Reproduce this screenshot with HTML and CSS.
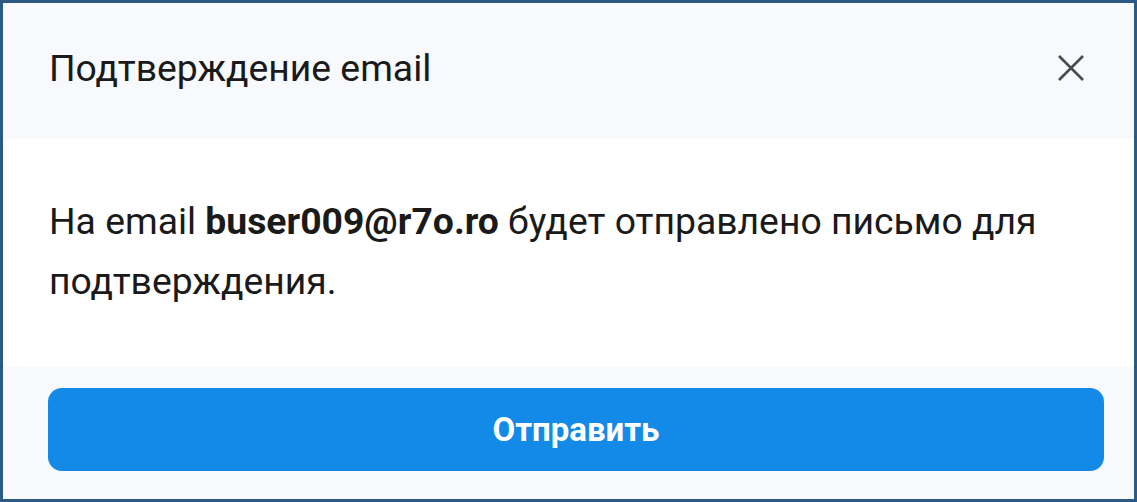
FILE: index.html
```html
<!DOCTYPE html>
<html lang="ru">
<head>
  <meta charset="UTF-8" />
  <meta name="viewport" content="width=device-width, initial-scale=1.0"/>
  <title>Подтверждение email</title>
  <link rel="stylesheet" href="styles.css">
</head>
<body>
  <div class="modal">
    <div class="modal-header">
      <h2>Подтверждение email</h2>
      <button class="close-btn" aria-label="Закрыть">
        <svg width="28" height="28" viewBox="0 0 28 28">
          <path d="M2 2 L26 26 M26 2 L2 26" stroke="#4a4a4a" stroke-width="2.6" fill="none"/>
        </svg>
      </button>
    </div>

    <div class="modal-body">
      <p>На email <strong>buser009@r7o.ro</strong> будет отправлено письмо для подтверждения.</p>
    </div>

    <div class="modal-footer">
      <button class="send-btn">Отправить</button>
    </div>
  </div>
</body>
</html>
```

FILE: styles.css
```css
html, body {
  margin: 0;
  padding: 0;
}

body {
  font-family: Roboto, "Liberation Sans", Arial, sans-serif;
  background: #fff;
}

.modal {
  width: 1137px;
  height: 502px;
  box-sizing: border-box;
  border: 3px solid #2d5985;
  display: flex;
  flex-direction: column;
}

.modal-header {
  height: 136px;
  box-sizing: border-box;
  background: #f7f9fc;
  display: flex;
  align-items: center;
  justify-content: space-between;
  padding: 0 49px 6px 46px;
}

.modal-header h2 {
  margin: 0;
  font-weight: 400;
  font-size: 37.3px;
  color: #1a1a1a;
}

.close-btn {
  background: none;
  border: none;
  padding: 0;
  width: 28px;
  height: 28px;
  cursor: pointer;
}

.modal-body {
  height: 228px;
  background: #fff;
  padding: 0 46px 4px;
  box-sizing: border-box;
  display: flex;
  align-items: center;
}

.modal-body p {
  margin: 0;
  font-size: 37.3px;
  line-height: 60px;
  color: #1a1a1a;
}

.modal-body strong {
  font-weight: 700;
}

.modal-footer {
  flex: 1;
  background: #f7f9fc;
  padding: 21px 30px 0 45px;
}

.send-btn {
  width: 100%;
  height: 83px;
  background: #148ae8;
  color: #fff;
  border: none;
  border-radius: 14px;
  font-family: Roboto, "Liberation Sans", Arial, sans-serif;
  font-size: 33px;
  font-weight: 700;
  cursor: pointer;
}
```
